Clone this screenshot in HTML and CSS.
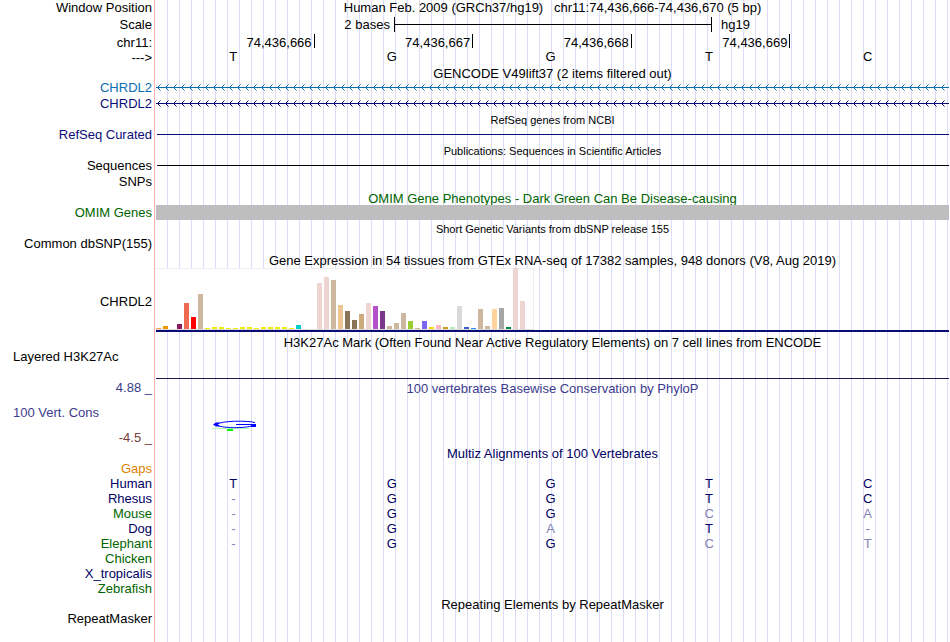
FILE: index.html
```
<!DOCTYPE html>
<html lang="en">
<head>
  <meta charset="UTF-8" />
  <meta name="viewport" content="width=device-width, initial-scale=1.0"/>
  <title>Human chr11:74,436,666-74,436,670</title>
  <link rel="stylesheet" href="styles.css">
</head>
<body>
  <svg class="defs" aria-hidden="true">
    <defs>
      <pattern id="arrows-blue" width="8" height="16" patternUnits="userSpaceOnUse">
        <path class="arrow-blue" d="M4.5 4.5 L1.5 7.5 L4.5 10.5"/>
      </pattern>
      <pattern id="arrows-navy" width="8" height="16" patternUnits="userSpaceOnUse">
        <path class="arrow-navy" d="M4.5 4.5 L1.5 7.5 L4.5 10.5"/>
      </pattern>
    </defs>
  </svg>

  <main class="browser">
    <!-- ruler -->
    <div class="row">
      <div class="label">Window Position</div>
      <div class="title position">Human Feb. 2009 (GRCh37/hg19)   chr11:74,436,666-74,436,670 (5 bp)</div>
    </div>
    <div class="row row-scale">
      <div class="label">Scale</div>
      <div class="scale">
        <span class="scale-size">2 bases</span>
        <span class="scale-bar"></span>
        <span class="scale-db">hg19</span>
      </div>
    </div>
    <div class="row row-ticks">
      <div class="label">chr11:</div>
      <div class="ticks">
        <span class="tick">74,436,666</span>
        <span class="tick">74,436,667</span>
        <span class="tick">74,436,668</span>
        <span class="tick">74,436,669</span>
      </div>
    </div>
    <div class="row">
      <div class="label">---&gt;</div>
      <div class="bases"><span>T</span><span>G</span><span>G</span><span>T</span><span>C</span></div>
    </div>

    <!-- genes -->
    <div class="row row-title-first"><div class="title title-low">GENCODE V49lift37 (2 items filtered out)</div></div>
    <div class="row">
      <div class="label blue">CHRDL2</div>
      <svg class="intron"><rect class="fill-blue" y="7" width="100%" height="1"/><rect width="100%" height="16" fill="url(#arrows-blue)"/></svg>
    </div>
    <div class="row">
      <div class="label navy">CHRDL2</div>
      <svg class="intron"><rect class="fill-navy" y="7" width="100%" height="1"/><rect width="100%" height="16" fill="url(#arrows-navy)"/></svg>
    </div>
    <div class="row row-tight"><div class="title title-low small">RefSeq genes from NCBI</div></div>
    <div class="row">
      <div class="label navy">RefSeq Curated</div>
      <div class="line line-navy"></div>
    </div>
    <div class="row row-tight"><div class="title title-low small">Publications: Sequences in Scientific Articles</div></div>
    <div class="row">
      <div class="label">Sequences</div>
      <div class="line"></div>
    </div>
    <div class="row"><div class="label">SNPs</div></div>

    <!-- variants -->
    <div class="row row-tight"><div class="title title-low green">OMIM Gene Phenotypes - Dark Green Can Be Disease-causing</div></div>
    <div class="row row-tight">
      <div class="label green">OMIM Genes</div>
      <div class="omim"></div>
    </div>
    <div class="row"><div class="title title-low small">Short Genetic Variants from dbSNP release 155</div></div>
    <div class="row"><div class="label">Common dbSNP(155)</div></div>

    <!-- expression -->
    <div class="row"><div class="title title-low">Gene Expression in 54 tissues from GTEx RNA-seq of 17382 samples, 948 donors (V8, Aug 2019)</div></div>
    <div class="row row-gtex">
      <div class="label">CHRDL2</div>
      <div class="gtex"><div class="bars" id="bars"></div></div>
    </div>

    <!-- regulation -->
    <div class="row row-tight"><div class="title">H3K27Ac Mark (Often Found Near Active Regulatory Elements) on 7 cell lines from ENCODE</div></div>
    <div class="row row-h3k">
      <div class="label label-left">Layered H3K27Ac</div>
      <div class="h3k"></div>
    </div>

    <!-- conservation -->
    <div class="row">
      <div class="label indigo">4.88 _</div>
      <div class="title title-low indigo">100 vertebrates Basewise Conservation by PhyloP</div>
    </div>
    <div class="row row-cons">
      <div class="label label-left indigo">100 Vert. Cons</div>
      <div class="bases logo">
        <svg width="46" height="10" viewBox="0 0 46 10">
          <path class="fill-lime" d="M15 8h6v3h-6z"/>
          <path class="lime-line" d="M0 8.5h37"/>
          <path class="logo-line" d="M43 2.5C35 .5 10 .5 4 4.5C8 8.5 34 8.5 41 5.5M24 4.5H42"/>
          <path class="fill-logo" d="M1 4.5L4 2.5L8 2.5L6 4.5L8 6.500L4 6.500zM39 4h5v3h-5z"/>
        </svg>
      </div>
    </div>
    <div class="row row-low"><div class="label maroon">-4.5 _</div></div>

    <div class="row row-multiz"><div class="title midnight">Multiz Alignments of 100 Vertebrates</div></div>
    <table class="multiz">
      <tr><th scope="row" class="orange">Gaps</th><td></td><td></td><td></td><td></td><td></td></tr>
      <tr><th scope="row" class="midnight">Human</th><td>T</td><td>G</td><td>G</td><td>T</td><td>C</td></tr>
      <tr><th scope="row" class="midnight">Rhesus</th><td class="diff">-</td><td>G</td><td>G</td><td>T</td><td>C</td></tr>
      <tr><th scope="row" class="green">Mouse</th><td class="diff">-</td><td>G</td><td>G</td><td class="diff">C</td><td class="diff">A</td></tr>
      <tr><th scope="row" class="midnight">Dog</th><td class="diff">-</td><td>G</td><td class="diff">A</td><td>T</td><td class="diff">-</td></tr>
      <tr><th scope="row" class="green">Elephant</th><td class="diff">-</td><td>G</td><td>G</td><td class="diff">C</td><td class="diff">T</td></tr>
      <tr><th scope="row" class="green">Chicken</th><td></td><td></td><td></td><td></td><td></td></tr>
      <tr><th scope="row" class="midnight">X_tropicalis</th><td></td><td></td><td></td><td></td><td></td></tr>
      <tr><th scope="row" class="green">Zebrafish</th><td></td><td></td><td></td><td></td><td></td></tr>
    </table>

    <!-- repeats -->
    <div class="row row-tight"><div class="title title-low">Repeating Elements by RepeatMasker</div></div>
    <div class="row row-tight"><div class="label">RepeatMasker</div></div>
  </main>

  <script>
    // [height, color] for each of the 54 tissues
    const tissues = [
      [1, "#ffa54f"], [3, "#ee9a00"], [0, "#8fbc8f"], [5, "#8b1c62"], [26, "#ee6a50"], [12, "#ff0000"],
      [35, "#cdb79e"], [1, "#eeee00"], [2, "#eeee00"], [2, "#eeee00"], [1, "#eeee00"], [1, "#eeee00"],
      [2, "#eeee00"], [2, "#eeee00"], [1, "#eeee00"], [2, "#eeee00"], [2, "#eeee00"], [2, "#eeee00"],
      [2, "#eeee00"], [1, "#eeee00"], [4, "#00cdcd"], [0, "#ee82ee"], [0, "#9ac0cd"], [46, "#eed5d2"],
      [52, "#eed5d2"], [49, "#cdb79e"], [24, "#eec591"], [18, "#8b7355"], [9, "#8b7355"], [15, "#cdaa7d"],
      [26, "#eed5d2"], [23, "#b452cd"], [18, "#7a378b"], [3, "#cdb79e"], [6, "#cdb79e"], [16, "#cdb79e"],
      [8, "#9acd32"], [1, "#cdb79e"], [8, "#7a67ee"], [2, "#ffd700"], [4, "#ffb6c1"], [2, "#cd9b1d"],
      [2, "#b4eeb4"], [23, "#d9d9d9"], [2, "#3a5fcd"], [1, "#1e90ff"], [20, "#cdb79e"], [3, "#cdb79e"],
      [20, "#ffd39b"], [21, "#a6a6a6"], [2, "#008b45"], [61, "#eed5d2"], [28, "#eed5d2"], [0, "#ff00ff"]
    ];
    const bars = document.getElementById("bars");

    tissues.forEach(([height, color]) => {
      const bar = document.createElement("span");
      bar.className = "bar";
      bar.style.height = height + "px";
      bar.style.background = color;
      bars.appendChild(bar);
    });
  </script>
</body>
</html>
```
FILE: styles.css
```
* {
  box-sizing: border-box;
}
body {
  margin: 0;
  font-family: "Liberation Sans", Arial, Helvetica, sans-serif;
  font-size: 13px;
  line-height: 16px;
  color: #000;
  background: #fff;
}
.defs {
  position: absolute;
  width: 0;
  height: 0;
}
/* label margin with the red edge, then a guide line every 12px */
.browser {
  min-height: 100vh;
  padding-right: 1px;
  background:
    linear-gradient(to right, #fff 154px, #ffb4b4 154px, #ffb4b4 155px, #fff 155px) 0 0 / 156px 100% no-repeat,
    linear-gradient(to right, #dcdcf8 1px, transparent 1px) 155px 0 / 12px 100% repeat-x;
}
.row {
  display: grid;
  grid-template-columns: 156px minmax(0, 1fr);
  height: 16px;
}
.row-scale {
  height: 18px;
  line-height: 18px;
}
.row-ticks {
  line-height: 18px;
}
.row-title-first,
.row-multiz {
  height: 14px;
  line-height: 14px;
}
.row-tight {
  height: 15px;
  line-height: 15px;
}
.row-gtex {
  height: 67px;
  line-height: 67px;
}
.row-h3k {
  height: 30px;
  line-height: 14px;
}
.row-cons {
  height: 34px;
  line-height: 34px;
}
.row-low {
  height: 17px;
}
.label {
  padding-right: 4px;
  text-align: right;
  white-space: nowrap;
}
.label-left {
  padding-left: 13px;
  text-align: left;
}
.title {
  grid-column: 2;
  text-align: center;
  white-space: nowrap;
}
.title-low {
  padding-top: 1px;
}
.position {
  white-space: pre;
}
.small {
  font-size: 11px;
}

/* ruler */
.scale {
  display: grid;
  grid-template-columns: 30% 40% 30%;
}
.scale-size {
  padding-right: 4px;
  text-align: right;
}
.scale-bar {
  height: 15px;
  margin: 1px -1px 0 0;
  border: solid #000;
  border-width: 0 1px;
  background: linear-gradient(#000, #000) 0 7px / 100% 1px no-repeat;
}
.scale-db {
  padding-left: 10px;
}
.ticks,
.bases {
  display: grid;
  grid-template-columns: repeat(5, 1fr);
}
.tick {
  height: 14px;
  padding-right: 2px;
  border-right: 1px solid #000;
  text-align: right;
}
.bases {
  line-height: 14px;
  text-align: center;
}
.bases span {
  padding-right: 4px;
}

/* tracks */
.intron {
  display: block;
  width: 100%;
  height: 16px;
}
.arrow-blue,
.arrow-navy {
  fill: none;
  stroke: #0c6cb0;
}
.arrow-navy {
  stroke: #0c0c78;
}
.fill-blue {
  fill: #0c6cb0;
}
.fill-navy {
  fill: #0c0c78;
}
.line {
  height: 1px;
  margin: 7px 0 0 1px;
  background: #000;
}
.line-navy {
  background: #0c0c78;
}
.omim {
  background: #bebebe;
}
.gtex {
  height: 64px;
  border-bottom: 2px solid #0c0c78;
}
.bars {
  display: flex;
  align-items: flex-end;
  gap: 2px;
  width: max-content;
  height: 62px;
  padding-right: 2px;
  border: solid #eee;
  border-width: 1px 0;
  border-bottom-color: #dcdcdc;
  background: #fff;
  box-shadow: inset -1px 0 #eee;
}
.bar {
  width: 5px;
}
.h3k {
  height: 29px;
  border-bottom: 1px solid #1c1c50;
}
.logo {
  align-items: end;
  justify-items: center;
}
.logo svg {
  display: block;
  overflow: visible;
}
.logo-line {
  fill: none;
  stroke: #00f;
}
.fill-logo {
  fill: #00f;
}
.fill-lime {
  fill: #0f0;
}
.lime-line {
  stroke: #b0ffb0;
}

/* alignment */
.multiz {
  width: 100%;
  table-layout: fixed;
  border-collapse: collapse;
  line-height: 15px;
  color: #000064;
}
.multiz th {
  width: 156px;
  height: 15px;
  padding: 0 4px 0 0;
  font-weight: normal;
  text-align: right;
}
.multiz td {
  padding: 0 4px 0 0;
  text-align: center;
}
.multiz .diff {
  color: #8282b4;
}

.blue { color: #0c6cb0; }
.navy { color: #0c0c78; }
.midnight { color: #000064; }
.green { color: #006400; }
.indigo { color: #3c3c8c; }
.maroon { color: #783c3c; }
.orange { color: #e08200; }
```
